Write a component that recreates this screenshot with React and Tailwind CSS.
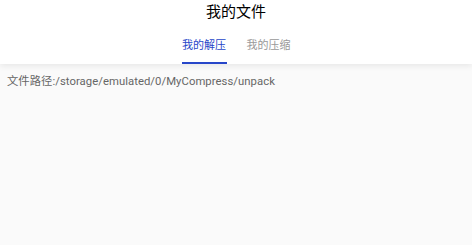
export default function App() {
  const font = { fontFamily: '"Roboto", "Noto Sans CJK SC", sans-serif' };
  return (
    <div className="h-[245px] w-full bg-[#fafafa] overflow-hidden" style={font}>
      <div className="relative bg-white shadow-[0_2px_6px_rgba(0,0,0,0.08)]">
        <div className="h-[25px] flex items-center justify-center text-[15px] text-black">我的文件</div>
        <div className="h-[39px] flex justify-center gap-[20px]">
          <div className="flex flex-col items-center justify-end">
            <span className="text-[11px] text-[#2746c9] leading-none mb-[11px]">我的解压</span>
            <div className="h-[2px] w-[45px] bg-[#2746c9]" />
          </div>
          <div className="flex flex-col items-center justify-end">
            <span className="text-[11px] text-[#999] leading-none mb-[13px]">我的压缩</span>
          </div>
        </div>
      </div>
      <div className="px-[7px] pt-[12px] text-[11.3px] tracking-[0.05px] text-[#666] leading-none">
        文件路径:/storage/emulated/0/MyCompress/unpack
      </div>
    </div>
  );
}
